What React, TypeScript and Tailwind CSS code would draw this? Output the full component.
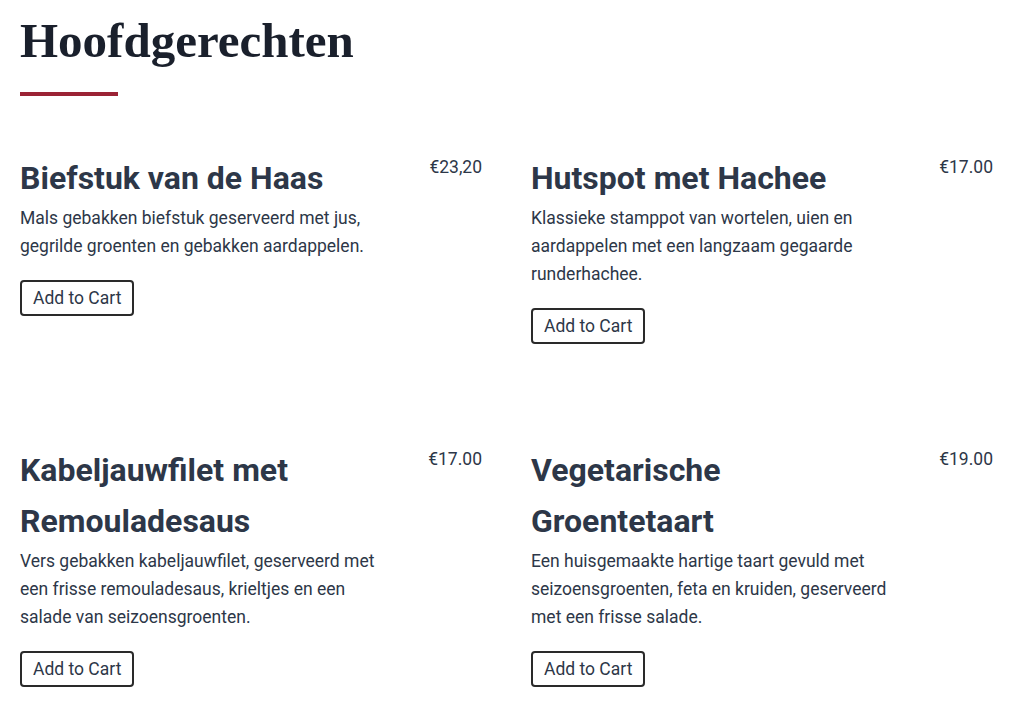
import React from "react";

const items = [
  {
    title: "Biefstuk van de Haas",
    price: "€23,20",
    desc: "Mals gebakken biefstuk geserveerd met jus, gegrilde groenten en gebakken aardappelen.",
  },
  {
    title: "Hutspot met Hachee",
    price: "€17.00",
    desc: "Klassieke stamppot van wortelen, uien en aardappelen met een langzaam gegaarde runderhachee.",
  },
  {
    title: "Kabeljauwfilet met Remouladesaus",
    price: "€17.00",
    desc: "Vers gebakken kabeljauwfilet, geserveerd met een frisse remouladesaus, krieltjes en een salade van seizoensgroenten.",
  },
  {
    title: "Vegetarische Groentetaart",
    price: "€19.00",
    desc: "Een huisgemaakte hartige taart gevuld met seizoensgroenten, feta en kruiden, geserveerd met een frisse salade.",
  },
];

export default function App() {
  return (
    <div className="min-h-[724px] bg-white pl-5 pt-[16px] font-['Roboto',sans-serif] text-[#2d3748]">
      <h1 className="font-['Liberation_Serif',serif] text-[49px] font-bold leading-[49px] text-[#1a202c]">
        Hoofdgerechten
      </h1>
      <div className="mt-[27px] h-[4px] w-[98px] bg-[#9b2335]" />
      <div className="mt-[57px] grid grid-cols-[464px_464px] gap-x-[47px] gap-y-[101px]">
        {items.map((it) => (
          <div key={it.title} className="flex items-start justify-between">
            <div className="w-[372px]">
              <h2 className="text-[32px] font-bold leading-[51px] text-[#2d3748]">{it.title}</h2>
              <p className="text-[17.5px] leading-[28px] text-[#2d3748]">{it.desc}</p>
              <button className="mt-5 rounded-[4px] border-2 border-[#2a2a2a] px-[11px] py-[4px] text-[17.5px] leading-[24px] text-[#2d3748]">
                Add to Cart
              </button>
            </div>
            <div className="pr-[2px] text-[17.5px] leading-[28px] text-[#2d3748]">{it.price}</div>
          </div>
        ))}
      </div>
    </div>
  );
}
